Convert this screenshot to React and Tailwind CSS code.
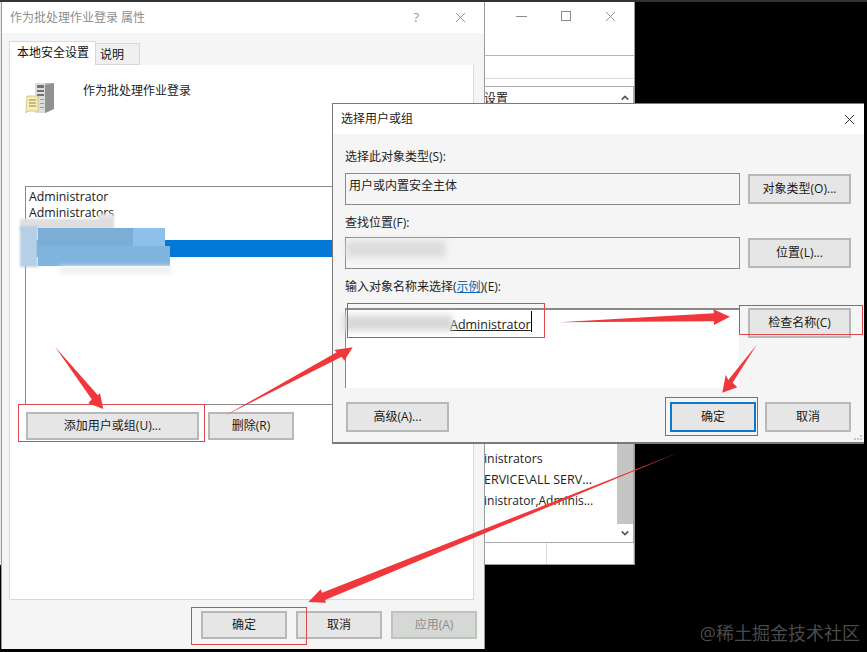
const FONT = { fontFamily: '"Open Sans", "Noto Sans CJK SC", sans-serif' };

const TONES = {
  normal: "border-[#b8b8b8] bg-[#e6e6e6] text-[#1a1a1a]",
  focus: "border-[#0f78c8] bg-[#e6e6e6] text-[#1a1a1a]",
  disabled: "border-[#c0c2c0] bg-[#d6d8d6] text-[#8d8d8d]",
};

function Btn({ className = "", tone = "normal", children }) {
  return (
    <div className={`flex items-center justify-center border-2 text-[12px] ${TONES[tone]} ${className}`}>
      {children}
    </div>
  );
}

function CloseIcon({ className = "", color = "#8a8a8a" }) {
  return (
    <svg viewBox="0 0 12 12" className={className} fill="none" stroke={color} strokeWidth="1">
      <path d="M1 1l10 10M11 1L1 11" />
    </svg>
  );
}

function ServerIcon() {
  return (
    <svg viewBox="0 0 30 32" className="w-[30px] h-[32px]">
      <path d="M10 1h19v26l-9 4h-10z" fill="#b9bcbc" />
      <path d="M20 3l9-2v26l-9 4z" fill="#8e9391" />
      <path d="M10 1h10v30h-10z" fill="#dcdedd" />
      <path d="M12 3h7v3h-7zM12 8h7v2h-7zM12 12h7v2h-7z" fill="#6f7472" />
      <path d="M15 17h4v1h-4zM15 21h4v1h-4zM15 25h4v1h-4z" fill="#9a9e9c" />
      <path d="M2 14h11v13l1 2H3l-2 2z" fill="#f6eeb4" stroke="#c9bd76" strokeWidth="0.8" />
      <path d="M4 18h7M4 21h7M4 24h7" stroke="#8d8a62" strokeWidth="1" />
    </svg>
  );
}

function BehindWindow() {
  return (
    <div className="absolute left-[484px] top-[2px] w-[151px] h-[563px] bg-white border-r border-b border-[#9b9b9b] flex flex-col">
      <div className="h-[54px] flex justify-end items-start pt-[9px] pr-[18px] gap-[34px] border-b border-[#b5b5b5] shrink-0">
        <div className="w-[11px] h-px bg-[#8a8a8a] mt-[5px]" />
        <div className="w-[10px] h-[10px] border border-[#8a8a8a]" />
        <CloseIcon className="w-[11px] h-[11px]" />
      </div>
      <div className="h-[23px] border-b border-[#dcdcdc] shrink-0" />
      <div className="h-[457px] border-t border-b border-r border-[#a8a8a8] mt-[7px] flex shrink-0">
        <div className="flex-1 text-[12px] text-[#222] leading-[21px]">
          <div className="h-[18px] leading-[18px] mt-[3px]">设置</div>
          <div className="mt-[340px] text-[12.3px]">inistrators</div>
          <div className="whitespace-nowrap text-[12.5px]">ERVICE\ALL SERV...</div>
          <div className="whitespace-nowrap">inistrator,Adminis...</div>
        </div>
        <div className="w-[16px] flex flex-col items-center">
          <svg viewBox="0 0 10 6" className="w-[8px] h-[6px] mt-[8px]" fill="none" stroke="#555" strokeWidth="2"><path d="M1 5l4-4 4 4" /></svg>
          <div className="w-full bg-[#c4c6c4] h-[86px] mt-auto mb-[6px]" />
          <svg viewBox="0 0 10 6" className="w-[8px] h-[6px] mb-[6px]" fill="none" stroke="#555" strokeWidth="2"><path d="M1 1l4 4 4-4" /></svg>
        </div>
      </div>
      <div className="flex-1 flex">
        <div className="w-[63px] border-r border-[#dcdcdc]" />
        <div className="flex-1 border-r border-[#dcdcdc]" />
      </div>
    </div>
  );
}

function MainWindow() {
  return (
    <div className="absolute left-[1px] top-[2px] w-[484px] h-[647px] bg-[#f5f5f5] border-l border-r border-[#9b9b9b] flex flex-col">
      <div className="h-[31px] bg-white flex items-center justify-between pl-[8px] pr-[18px] shrink-0">
        <span className="text-[12px] text-[#8e8e8e]">作为批处理作业登录 属性</span>
        <div className="flex items-center gap-[36px]">
          <span className="text-[13px] text-[#9a9a9a]">?</span>
          <CloseIcon className="w-[11px] h-[11px]" />
        </div>
      </div>
      <div className="pl-[7px] flex items-end h-[32px] shrink-0">
        <div className="w-[87px] h-[24px] bg-white border border-b-0 border-[#d9d9d9] text-[12px] text-[#111] pl-[7px] leading-[22px]">本地安全设置</div>
        <div className="w-[44px] h-[22px] bg-[#f0f0f0] border border-l-0 border-[#d9d9d9] text-[12px] text-[#111] pl-[4px] leading-[22px]">说明</div>
      </div>
      <div className="w-[465px] h-[535px] ml-[7px] bg-white border border-t-0 border-[#d9d9d9] pl-[15px] pt-[17px] shrink-0">
        <div className="flex gap-[28px] h-[104px]">
          <ServerIcon />
          <span className="text-[12px] text-[#222]">作为批处理作业登录</span>
        </div>
        <div className="w-[420px] h-[219px] border border-[#8a8a8a] text-[12.3px] text-[#1a1a1a] pl-[3px] pt-[2px] leading-[16px]">
          <div>Administrator</div>
          <div>Administrators</div>
          <div className="h-[17px] mt-[19px] -ml-[3px] bg-[#0078d7]" />
        </div>
        <div className="flex gap-[9px] mt-[7px] ml-px">
          <Btn className="w-[173px] h-[28px]">添加用户或组(U)...</Btn>
          <Btn className="w-[86px] h-[28px]">删除(R)</Btn>
        </div>
      </div>
      <div className="flex justify-end gap-[9px] pr-[7px] pt-[11px]">
        <Btn className="w-[86px] h-[28px]">确定</Btn>
        <Btn className="w-[86px] h-[28px]">取消</Btn>
        <Btn className="w-[86px] h-[28px]" tone="disabled">应用(A)</Btn>
      </div>
    </div>
  );
}

function PickerDialog() {
  return (
    <div className="absolute left-[332px] top-[103px] w-[532px] h-[341px] bg-[#f5f5f5] border-t border-l border-b-2 border-[#7a7a7a] flex flex-col">
      <div className="h-[30px] bg-white flex items-center justify-between pl-[8px] pr-[9px] shrink-0">
        <span className="text-[12px] text-[#222]">选择用户或组</span>
        <CloseIcon className="w-[11px] h-[11px]" color="#222" />
      </div>
      <div className="pl-[12px] pr-[13px] flex-1 text-[12px] text-[#222]">
        <div className="mt-[15px] leading-[16px]">选择此对象类型(S):</div>
        <div className="flex justify-between mt-[8px]">
          <div className="w-[395px] h-[32px] border border-[#8a8a8a] pl-[3px] leading-[23px]">用户或内置安全主体</div>
          <Btn className="w-[103px] h-[30px] mt-px">对象类型(O)...</Btn>
        </div>
        <div className="mt-[10px] leading-[16px]">查找位置(F):</div>
        <div className="flex justify-between mt-[6px]">
          <div className="w-[395px] h-[32px] border border-[#8a8a8a]" />
          <Btn className="w-[103px] h-[30px] mt-px">位置(L)...</Btn>
        </div>
        <div className="mt-[10px] leading-[16px]">
          输入对象名称来选择(<span className="text-[#0a6ab8] underline">示例</span>)(E):
        </div>
        <div className="flex justify-between mt-[13px]">
          <div className="w-[394px] h-[80px] bg-white border-t-2 border-l border-[#8a8a8a] relative text-[12.5px] text-[#222]">
            <span className="absolute left-[104px] top-[7px] underline leading-[16px]">Administrator</span>
            <div className="absolute left-[185px] top-[1px] w-px h-[21px] bg-black" />
          </div>
          <Btn className="w-[103px] h-[30px]">检查名称(C)</Btn>
        </div>
        <div className="flex mt-[14px] pl-px">
          <Btn className="w-[103px] h-[30px]">高级(A)...</Btn>
          <Btn className="w-[86px] h-[30px] ml-auto" tone="focus">确定</Btn>
          <Btn className="w-[86px] h-[30px] ml-[9px]">取消</Btn>
        </div>
      </div>
      <div className="absolute right-[2px] bottom-[2px] grid grid-cols-3 gap-px w-[8px]">
        {[0, 1, 2, 3, 4, 5].map((i) => (
          <div key={i} className={`w-[2px] h-[2px] ${i === 0 || i === 1 ? "invisible" : "bg-[#c8c8c8]"}`} />
        ))}
      </div>
    </div>
  );
}

function Smudges() {
  return (
    <>
      <div className="absolute left-[98px] top-[214px] w-[16px] h-[8px] bg-[#e4e4e4] blur-[1px]" />
      <div className="absolute left-[20px] top-[219px] w-[94px] h-[12px] bg-[#dedede] blur-[1px]" />
      <div className="absolute left-[20px] top-[226px] w-[18px] h-[41px] bg-[#b5d0e6] blur-[1px]" />
      <div className="absolute left-[38px] top-[228px] w-[95px] h-[19px] bg-[#7aaed6] blur-[0.5px]" />
      <div className="absolute left-[133px] top-[228px] w-[32px] h-[19px] bg-[#8dc0ea] blur-[0.5px]" />
      <div className="absolute left-[38px] top-[246px] w-[132px] h-[20px] bg-[#7fb4df] blur-[0.5px]" />
      <div className="absolute left-[60px] top-[266px] w-[112px] h-[8px] bg-[#f0f0f0] blur-[2px]" />
      <div className="absolute left-[346px] top-[241px] w-[100px] h-[16px] bg-[#dcdcdc] blur-[3px]" />
      <div className="absolute left-[343px] top-[315px] w-[110px] h-[16px] bg-[#d8d8d8] blur-[3px]" />
    </>
  );
}

function Annotations() {
  return (
    <>
      <div className="absolute left-[18px] top-[404px] w-[187px] h-[38px] border border-[#e0474c]" />
      <div className="absolute left-[191px] top-[607px] w-[116px] h-[38px] border border-[#e0474c]" />
      <div className="absolute left-[347px] top-[303px] w-[198px] h-[35px] border border-[#e0474c]" />
      <div className="absolute left-[739px] top-[305px] w-[124px] h-[30px] border border-[#e0474c]" />
      <div className="absolute left-[665px] top-[397px] w-[93px] h-[39px] border border-[#e0474c]" />
      <svg className="absolute left-0 top-0 w-[867px] h-[652px]" viewBox="0 0 867 652" fill="#f0383c">
        <path d="M55 346.7L97.7 395 100 393.3 103.3 409 88.3 403.3 91.7 399.3z" />
        <path d="M224.3 416L336.7 352.3 334.3 350 352.7 347.3 344.3 360.7 341.7 356.7z" />
        <path d="M559.3 322.3L714 313.3 713.3 309.3 730 316.7 714 325 714 321.3z" />
        <path d="M757 344.3L728.3 380 725.7 374.7 722.3 392.7 737.3 387.3 732.7 382.7z" />
        <path d="M680 452L322 592.7 320.7 589.3 308.3 602 326 602.7 325 600z" />
      </svg>
    </>
  );
}

export default function App() {
  return (
    <div className="relative w-[867px] h-[652px] overflow-hidden bg-black" style={FONT}>
      <div className="h-[2px] bg-[#333333]" />
      <div className="absolute left-0 top-[2px] w-px h-[563px] bg-[#e8e8e8]" />
      <BehindWindow />
      <MainWindow />
      <PickerDialog />
      <Smudges />
      <Annotations />
      <div className="absolute right-[7px] top-[622px] text-[18px] text-[#4a4a4a] leading-[22px]">@稀土掘金技术社区</div>
    </div>
  );
}
